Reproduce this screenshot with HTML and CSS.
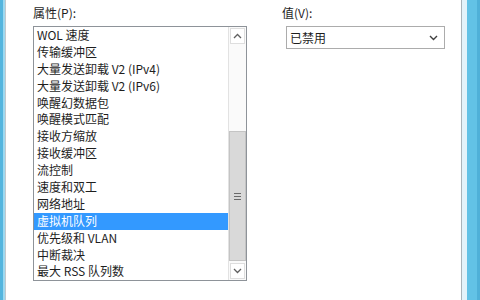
FILE: index.html
```html
<!DOCTYPE html>
<html lang="zh-CN">
<head>
  <meta charset="UTF-8" />
  <title>高级属性</title>
  <link rel="stylesheet" href="styles.css">
</head>
<body>
  <div class="window">
    <div class="frame-left"></div>

    <div class="content">
      <!-- 属性列表 -->
      <div class="prop-col">
        <div class="label">属性(P):</div>
        <div class="listbox">
          <ul class="items">
            <li>WOL 速度</li>
            <li>传输缓冲区</li>
            <li>大量发送卸载 V2 (IPv4)</li>
            <li>大量发送卸载 V2 (IPv6)</li>
            <li>唤醒幻数据包</li>
            <li>唤醒模式匹配</li>
            <li>接收方缩放</li>
            <li>接收缓冲区</li>
            <li>流控制</li>
            <li>速度和双工</li>
            <li>网络地址</li>
            <li class="selected">虚拟机队列</li>
            <li>优先级和 VLAN</li>
            <li>中断裁决</li>
            <li>最大 RSS 队列数</li>
          </ul>
          <div class="scrollbar">
            <div class="sb-btn">
              <svg width="9" height="6" viewBox="0 0 9 6"><path d="M1 5 L4.5 1.5 L8 5" fill="none" stroke="#606060" stroke-width="1.3"/></svg>
            </div>
            <div class="sb-track">
              <div class="sb-thumb">
                <span class="grip"></span>
              </div>
            </div>
            <div class="sb-btn">
              <svg width="9" height="6" viewBox="0 0 9 6"><path d="M1 1 L4.5 4.5 L8 1" fill="none" stroke="#606060" stroke-width="1.3"/></svg>
            </div>
          </div>
        </div>
      </div>

      <!-- 值 -->
      <div class="value-col">
        <div class="label">值(V):</div>
        <div class="select">
          <span>已禁用</span>
          <svg width="9" height="6" viewBox="0 0 9 6"><path d="M1 1 L4.5 4.5 L8 1" fill="none" stroke="#404040" stroke-width="1.4"/></svg>
        </div>
      </div>
    </div>

    <div class="frame-right"></div>
  </div>
</body>
</html>
```

FILE: styles.css
```css
/* Global */
body {
  margin: 0;
  padding: 0;
  background: #fff;
  font-family: "Noto Sans CJK SC", "Noto Sans", sans-serif;
  font-size: 12px;
  color: #1e1e1e;
}
.window {
  display: flex;
  width: 480px;
  height: 300px;
  overflow: hidden;
}

/* Window frame */
.frame-left {
  width: 5px;
  border-right: 1px solid #c3c8cc;
  background: linear-gradient(to right, #55b5de 0, #55b5de 3px, #9ed9f0 3px);
}
.frame-right {
  width: 18px;
  border-left: 1px solid #a9b4ba;
  background: linear-gradient(to right, #e3f3fa 0, #e3f3fa 5px, #62c2e6 5px, #62c2e6 15px, #4fb0d8 15px);
}
.content {
  flex: 1;
  display: flex;
  padding-left: 27px;
}

/* Labels */
.label {
  height: 17px;
  line-height: 17px;
  margin-top: 4px;
  margin-bottom: 5px;
}

/* Property list */
.prop-col {
  width: 214px;
}
.listbox {
  display: flex;
  height: 253px;
  border: 1px solid #8e9399;
  background: #fff;
}
.items {
  list-style: none;
  margin: 0;
  padding: 0;
  flex: 1;
  overflow: hidden;
}
.items li {
  height: 16.9px;
  line-height: 16.9px;
  padding-left: 3px;
  white-space: nowrap;
}
.items li.selected {
  background: #3399ff;
  color: #fff;
}

/* Scrollbar */
.scrollbar {
  width: 17px;
  display: flex;
  flex-direction: column;
  background: #fafafa;
  border-left: 1px solid #e2e2e2;
}
.sb-btn {
  height: 15px;
  display: flex;
  align-items: center;
  justify-content: center;
  margin: 1px;
  background: #fff;
  border: 1px solid #dedede;
  box-sizing: border-box;
  height: 16px;
}
.sb-track {
  flex: 1;
  display: flex;
  flex-direction: column;
  padding-top: 86px;
  padding-bottom: 1px;
}
.sb-thumb {
  flex: 1;
  margin: 0 0 0 0;
  background: #d9d9d9;
  border: 1px solid #c4c4c4;
  display: flex;
  align-items: center;
  justify-content: center;
}
.grip {
  width: 7px;
  height: 5px;
  border-top: 1px solid #6a6a6a;
  border-bottom: 1px solid #6a6a6a;
  background: linear-gradient(#d9d9d9 0, #d9d9d9 2px, #6a6a6a 2px, #6a6a6a 3px, #d9d9d9 3px);
}

/* Value column */
.value-col {
  margin-left: 35px;
}
.value-col .label {
  padding-left: 0;
}
.select {
  margin-left: 4px;
  width: 159px;
  height: 23px;
  box-sizing: border-box;
  border: 1px solid #acacac;
  display: flex;
  align-items: center;
  justify-content: space-between;
  padding: 0 6px 0 3px;
  background: #fff;
}
```
